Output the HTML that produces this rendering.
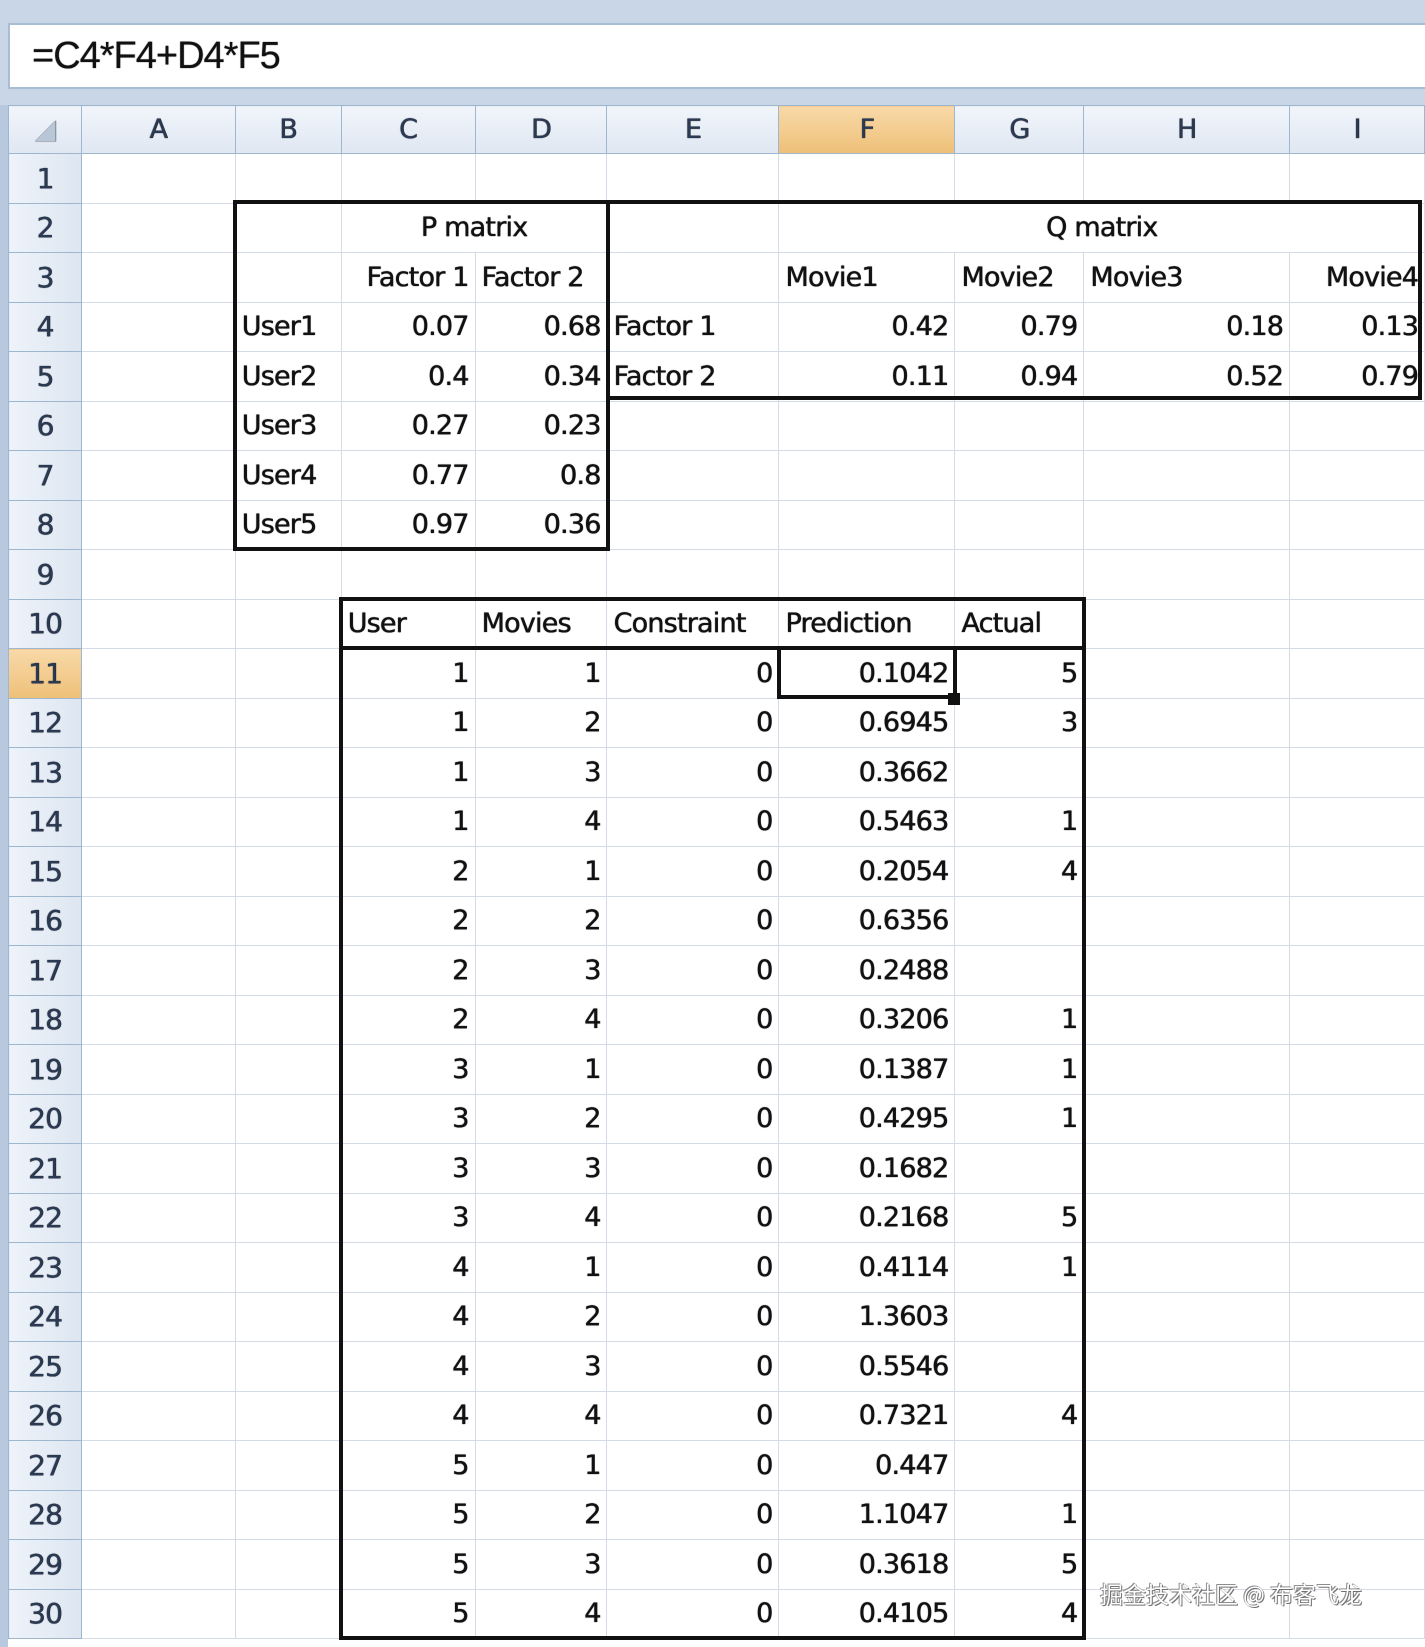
<!DOCTYPE html>
<html><head><meta charset="utf-8"><style>
*{margin:0;padding:0;box-sizing:border-box}
body{width:1425px;height:1647px;overflow:hidden;background:#fff;position:relative;font-family:"DejaVu Sans","Liberation Sans",sans-serif;color:#111}
.top{position:absolute;left:0;top:0;width:1425px;height:105px;background:#c9d6e8}
.fb{position:absolute;left:8px;top:23px;width:1417px;height:66px;background:#fff;border:2px solid #a9bcd6;border-right:none;font-size:38px;padding:10px 0 0 22px;letter-spacing:-1px;font-family:"Liberation Sans",sans-serif;text-shadow:0 0 1px #333}
.lstrip{position:absolute;left:0;top:105px;width:8px;height:1542px;background:#b8c9df}
table{position:absolute;left:8px;top:105px;border-collapse:collapse;table-layout:fixed}
td{border:1px solid #d4dae6;height:49.5px;font-size:27px;letter-spacing:-0.8px;white-space:nowrap;overflow:hidden;padding:0 6px;vertical-align:middle;text-shadow:0 0 1px #222,0.4px 0 0 #222}
tr.h td{height:48px;background:linear-gradient(#f1f5fb,#dfe7f2);border:1px solid #9eb6ce;text-align:center;color:#2a3a55;font-size:27px}
td.rh{background:linear-gradient(90deg,#eef3fa,#dde6f1);border:1px solid #9eb6ce;text-align:center;color:#2a3a55;padding:0;font-size:28px}
td.sel{background:linear-gradient(#f8d9a8,#eec078)!important}
.r{text-align:right}.c{text-align:center}
.box{position:absolute;border:4px solid #111}
.ln{position:absolute;background:#111}
.wm{position:absolute;left:1100px;top:1576px;font-size:23px;color:#fff;font-family:"Noto Sans CJK SC",sans-serif;text-shadow:0 0 1px #555,1px 1px 0 #777,-1px -1px 0 #999}
</style></head><body>
<div class="top"></div>
<div class="fb">=C4*F4+D4*F5</div>
<div class="lstrip"></div>
<table>
<colgroup><col style="width:73px"><col style="width:154px"><col style="width:106px"><col style="width:134px"><col style="width:132px"><col style="width:172px"><col style="width:176px"><col style="width:129px"><col style="width:206px"><col style="width:135px"></colgroup>
<tr class="h"><td style="color:#b8c6d8">◢</td><td>A</td><td>B</td><td>C</td><td>D</td><td>E</td><td class="sel">F</td><td>G</td><td>H</td><td>I</td></tr>
<tr><td class="rh">1</td><td></td><td></td><td></td><td></td><td></td><td></td><td></td><td></td><td></td></tr>
<tr><td class="rh">2</td><td></td><td></td><td colspan="2" class="c">P matrix</td><td></td><td colspan="4" class="c">Q matrix</td></tr>
<tr><td class="rh">3</td><td></td><td></td><td class="r">Factor 1</td><td>Factor 2</td><td></td><td>Movie1</td><td>Movie2</td><td>Movie3</td><td class="r">Movie4</td></tr>
<tr><td class="rh">4</td><td></td><td>User1</td><td class="r">0.07</td><td class="r">0.68</td><td>Factor 1</td><td class="r">0.42</td><td class="r">0.79</td><td class="r">0.18</td><td class="r">0.13</td></tr>
<tr><td class="rh">5</td><td></td><td>User2</td><td class="r">0.4</td><td class="r">0.34</td><td>Factor 2</td><td class="r">0.11</td><td class="r">0.94</td><td class="r">0.52</td><td class="r">0.79</td></tr>
<tr><td class="rh">6</td><td></td><td>User3</td><td class="r">0.27</td><td class="r">0.23</td><td></td><td></td><td></td><td></td><td></td></tr>
<tr><td class="rh">7</td><td></td><td>User4</td><td class="r">0.77</td><td class="r">0.8</td><td></td><td></td><td></td><td></td><td></td></tr>
<tr><td class="rh">8</td><td></td><td>User5</td><td class="r">0.97</td><td class="r">0.36</td><td></td><td></td><td></td><td></td><td></td></tr>
<tr><td class="rh">9</td><td></td><td></td><td></td><td></td><td></td><td></td><td></td><td></td><td></td></tr>
<tr><td class="rh">10</td><td></td><td></td><td>User</td><td>Movies</td><td>Constraint</td><td>Prediction</td><td>Actual</td><td></td><td></td></tr>
<tr><td class="rh sel">11</td><td></td><td></td><td class="r">1</td><td class="r">1</td><td class="r">0</td><td class="r">0.1042</td><td class="r">5</td><td></td><td></td></tr>
<tr><td class="rh">12</td><td></td><td></td><td class="r">1</td><td class="r">2</td><td class="r">0</td><td class="r">0.6945</td><td class="r">3</td><td></td><td></td></tr>
<tr><td class="rh">13</td><td></td><td></td><td class="r">1</td><td class="r">3</td><td class="r">0</td><td class="r">0.3662</td><td class="r"></td><td></td><td></td></tr>
<tr><td class="rh">14</td><td></td><td></td><td class="r">1</td><td class="r">4</td><td class="r">0</td><td class="r">0.5463</td><td class="r">1</td><td></td><td></td></tr>
<tr><td class="rh">15</td><td></td><td></td><td class="r">2</td><td class="r">1</td><td class="r">0</td><td class="r">0.2054</td><td class="r">4</td><td></td><td></td></tr>
<tr><td class="rh">16</td><td></td><td></td><td class="r">2</td><td class="r">2</td><td class="r">0</td><td class="r">0.6356</td><td class="r"></td><td></td><td></td></tr>
<tr><td class="rh">17</td><td></td><td></td><td class="r">2</td><td class="r">3</td><td class="r">0</td><td class="r">0.2488</td><td class="r"></td><td></td><td></td></tr>
<tr><td class="rh">18</td><td></td><td></td><td class="r">2</td><td class="r">4</td><td class="r">0</td><td class="r">0.3206</td><td class="r">1</td><td></td><td></td></tr>
<tr><td class="rh">19</td><td></td><td></td><td class="r">3</td><td class="r">1</td><td class="r">0</td><td class="r">0.1387</td><td class="r">1</td><td></td><td></td></tr>
<tr><td class="rh">20</td><td></td><td></td><td class="r">3</td><td class="r">2</td><td class="r">0</td><td class="r">0.4295</td><td class="r">1</td><td></td><td></td></tr>
<tr><td class="rh">21</td><td></td><td></td><td class="r">3</td><td class="r">3</td><td class="r">0</td><td class="r">0.1682</td><td class="r"></td><td></td><td></td></tr>
<tr><td class="rh">22</td><td></td><td></td><td class="r">3</td><td class="r">4</td><td class="r">0</td><td class="r">0.2168</td><td class="r">5</td><td></td><td></td></tr>
<tr><td class="rh">23</td><td></td><td></td><td class="r">4</td><td class="r">1</td><td class="r">0</td><td class="r">0.4114</td><td class="r">1</td><td></td><td></td></tr>
<tr><td class="rh">24</td><td></td><td></td><td class="r">4</td><td class="r">2</td><td class="r">0</td><td class="r">1.3603</td><td class="r"></td><td></td><td></td></tr>
<tr><td class="rh">25</td><td></td><td></td><td class="r">4</td><td class="r">3</td><td class="r">0</td><td class="r">0.5546</td><td class="r"></td><td></td><td></td></tr>
<tr><td class="rh">26</td><td></td><td></td><td class="r">4</td><td class="r">4</td><td class="r">0</td><td class="r">0.7321</td><td class="r">4</td><td></td><td></td></tr>
<tr><td class="rh">27</td><td></td><td></td><td class="r">5</td><td class="r">1</td><td class="r">0</td><td class="r">0.447</td><td class="r"></td><td></td><td></td></tr>
<tr><td class="rh">28</td><td></td><td></td><td class="r">5</td><td class="r">2</td><td class="r">0</td><td class="r">1.1047</td><td class="r">1</td><td></td><td></td></tr>
<tr><td class="rh">29</td><td></td><td></td><td class="r">5</td><td class="r">3</td><td class="r">0</td><td class="r">0.3618</td><td class="r">5</td><td></td><td></td></tr>
<tr><td class="rh">30</td><td></td><td></td><td class="r">5</td><td class="r">4</td><td class="r">0</td><td class="r">0.4105</td><td class="r">4</td><td></td><td></td></tr>
</table>
<div class="box" style="left:233px;top:200px;width:377px;height:351px"></div>
<div class="box" style="left:606px;top:200px;width:816px;height:200px"></div>
<div class="box" style="left:339px;top:597px;width:747px;height:1043px"></div>
<div class="ln" style="left:339px;top:646px;width:747px;height:4px"></div>
<div class="box" style="left:777px;top:646px;width:180px;height:53px"></div>
<div class="ln" style="left:948px;top:693px;width:12px;height:12px"></div>
<div class="wm">掘金技术社区 @ 布客飞龙</div>
</body></html>
